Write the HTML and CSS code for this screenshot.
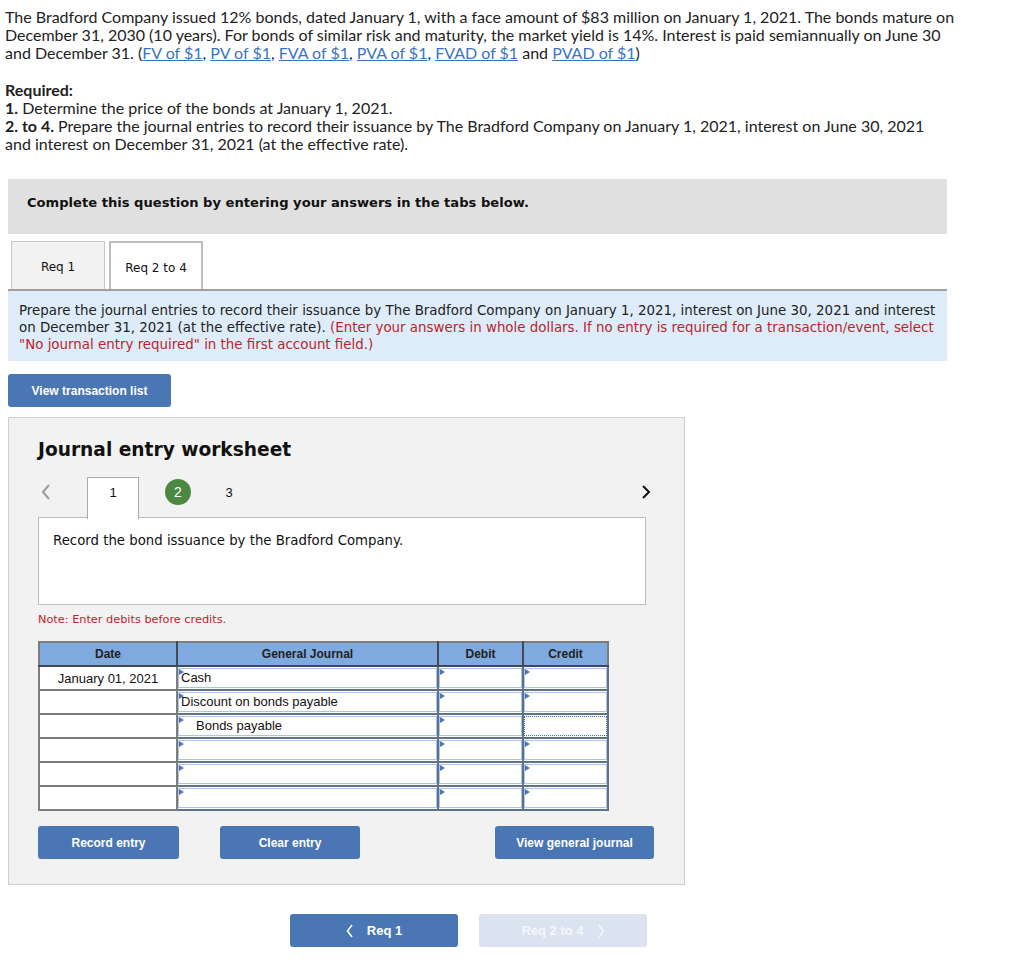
FILE: index.html
```html
<!DOCTYPE html>
<html lang="en">
<head>
  <meta charset="UTF-8">
  <title>Bond Issuance</title>
  <link rel="stylesheet" href="styles.css">
</head>
<body>

  <!-- Question -->
  <div class="question">
    <p>The Bradford Company issued 12% bonds, dated January 1, with a face amount of $83 million on January 1, 2021. The bonds mature on December 31, 2030 (10 years). For bonds of similar risk and maturity, the market yield is 14%. Interest is paid semiannually on June 30 and December 31. (<a href="#">FV of $1</a>, <a href="#">PV of $1</a>, <a href="#">FVA of $1</a>, <a href="#">PVA of $1</a>, <a href="#">FVAD of $1</a> and <a href="#">PVAD of $1</a>)</p>
    <p class="required">
      <b>Required:</b><br>
      <b>1.</b> Determine the price of the bonds at January 1, 2021.<br>
      <b>2. to 4.</b> Prepare the journal entries to record their issuance by The Bradford Company on January 1, 2021, interest on June 30, 2021 and interest on December 31, 2021 (at the effective rate).
    </p>
  </div>

  <div class="content">
    <div class="banner">Complete this question by entering your answers in the tabs below.</div>

    <div class="tabs">
      <div class="tab">Req 1</div>
      <div class="tab active">Req 2 to 4</div>
    </div>

    <div class="instructions">
      Prepare the journal entries to record their issuance by The Bradford Company on January 1, 2021, interest on June 30, 2021 and interest on December 31, 2021 (at the effective rate). <span class="red">(Enter your answers in whole dollars. If no entry is required for a transaction/event, select "No journal entry required" in the first account field.)</span>
    </div>

    <button class="btn btn-list">View transaction list</button>

    <!-- Worksheet -->
    <div class="worksheet">
      <h2>Journal entry worksheet</h2>

      <div class="entry-nav">
        <span class="arrow prev">
          <svg width="10" height="16" viewBox="0 0 10 16"><path d="M8 1 L2 8 L8 15" fill="none" stroke="#9a9a9a" stroke-width="2"/></svg>
        </span>
        <span class="step current">1</span>
        <span class="step done">2</span>
        <span class="step">3</span>
        <span class="arrow next">
          <svg width="10" height="16" viewBox="0 0 10 16"><path d="M2 2 L8 8 L2 14" fill="none" stroke="#111" stroke-width="2"/></svg>
        </span>
      </div>

      <div class="desc">Record the bond issuance by the Bradford Company.</div>

      <p class="note">Note: Enter debits before credits.</p>

      <table class="journal">
        <thead>
          <tr>
            <th class="col-date">Date</th>
            <th class="col-acct">General Journal</th>
            <th class="col-amt">Debit</th>
            <th class="col-amt">Credit</th>
          </tr>
        </thead>
        <tbody>
          <tr>
            <td class="date">January 01, 2021</td>
            <td><div class="field">Cash</div></td>
            <td><div class="field"></div></td>
            <td><div class="field"></div></td>
          </tr>
          <tr>
            <td class="date"></td>
            <td><div class="field">Discount on bonds payable</div></td>
            <td><div class="field"></div></td>
            <td><div class="field"></div></td>
          </tr>
          <tr>
            <td class="date"></td>
            <td><div class="field indent">Bonds payable</div></td>
            <td><div class="field"></div></td>
            <td><div class="field focus"></div></td>
          </tr>
          <tr>
            <td class="date"></td>
            <td><div class="field"></div></td>
            <td><div class="field"></div></td>
            <td><div class="field"></div></td>
          </tr>
          <tr>
            <td class="date"></td>
            <td><div class="field"></div></td>
            <td><div class="field"></div></td>
            <td><div class="field"></div></td>
          </tr>
          <tr>
            <td class="date"></td>
            <td><div class="field"></div></td>
            <td><div class="field"></div></td>
            <td><div class="field"></div></td>
          </tr>
        </tbody>
      </table>

      <div class="actions">
        <button class="btn btn-record">Record entry</button>
        <button class="btn btn-clear">Clear entry</button>
        <button class="btn btn-view">View general journal</button>
      </div>
    </div>

    <div class="pager">
      <button class="btn btn-page">
        <svg width="8" height="14" viewBox="0 0 8 14"><path d="M6 1 L1.5 7 L6 13" fill="none" stroke="#fff" stroke-width="1.6"/></svg>
        <span>Req 1</span>
      </button>
      <button class="btn btn-page disabled">
        <span>Req 2 to 4</span>
        <svg width="8" height="14" viewBox="0 0 8 14"><path d="M2 1 L6.5 7 L2 13" fill="none" stroke="#f4f7fb" stroke-width="1.6"/></svg>
      </button>
    </div>
  </div>

</body>
</html>
```

FILE: styles.css
```css
* {
  margin: 0;
  padding: 0;
  box-sizing: border-box;
}

body {
  font-family: 'Lato', 'Liberation Sans', sans-serif;
  color: #222;
  background: #fff;
}

/* Question text */
.question {
  width: 960px;
  padding: 8px 0 0 5px;
  font-size: 16px;
  line-height: 18.2px;
}

.question a {
  color: #3b73c0;
}

.required {
  margin-top: 18px;
  width: 945px;
}

.content {
  width: 939px;
  margin: 26px 0 0 8px;
}

.banner {
  background: #e0e0e0;
  height: 55px;
  padding: 13px 19px 0;
  font-family: 'DejaVu Sans', Verdana, sans-serif;
  font-size: 13.1px;
  font-weight: bold;
  line-height: 22px;
  color: #111;
}

/* Tabs */
.tabs {
  display: flex;
  margin-top: 7px;
  padding-left: 3px;
  border-bottom: 2px solid #a0a0a0;
  gap: 4px;
}

.tab {
  width: 94px;
  height: 48px;
  border: 1px solid #c8c8c8;
  border-bottom: none;
  background: #f2f2f2;
  font-family: 'DejaVu Sans', Verdana, sans-serif;
  font-size: 12px;
  line-height: 50px;
  text-align: center;
  color: #111;
}

.tab.active {
  background: #fff;
  border: 2px solid #bdbdbd;
  border-bottom: none;
}

.instructions {
  background: #ddecf8;
  padding: 11px 11px 8px;
  font-family: 'DejaVu Sans', Verdana, sans-serif;
  font-size: 13.4px;
  line-height: 17px;
  color: #222;
}

.red {
  color: #b8262b;
}

/* Buttons */
.btn {
  display: flex;
  align-items: center;
  justify-content: center;
  gap: 13px;
  border: none;
  border-radius: 3px;
  background: #4a76b3;
  color: #fff;
  font-family: 'Liberation Sans', Arial, sans-serif;
  font-size: 12px;
  font-weight: bold;
  height: 33px;
}

.btn-list {
  margin-top: 13px;
  width: 163px;
}

/* Worksheet */
.worksheet {
  margin-top: 10px;
  width: 677px;
  background: #f2f2f2;
  border: 1px solid #cfcfcf;
  padding: 21px 0 25px 29px;
}

.worksheet h2 {
  font-family: 'DejaVu Sans', Verdana, sans-serif;
  font-size: 18.6px;
  line-height: 22px;
  color: #111;
}

.entry-nav {
  display: flex;
  align-items: flex-start;
  height: 41px;
  margin-top: 16px;
  width: 616px;
  font-family: 'Liberation Sans', Arial, sans-serif;
  font-size: 13px;
  color: #111;
}

.arrow {
  display: flex;
  align-items: center;
  height: 30px;
}

.arrow.prev {
  margin-left: 3px;
  margin-right: 36px;
}

.arrow.next {
  margin-left: auto;
  margin-right: 3px;
}

.step {
  display: flex;
  align-items: center;
  justify-content: center;
  width: 26px;
  height: 26px;
  margin-top: 2px;
  margin-right: 26px;
}

.step.current {
  width: 52px;
  height: 42px;
  margin-top: 0;
  align-items: flex-start;
  padding-top: 7px;
  background: #fff;
  border: 1px solid #a9a9a9;
  border-bottom: none;
  position: relative;
  z-index: 1;
  margin-right: 26px;
}

.step.done {
  border-radius: 50%;
  background: #4d8843;
  color: #fff;
  font-size: 14px;
  margin-right: 25px;
}

.desc {
  width: 608px;
  height: 88px;
  margin-top: -1px;
  background: #fff;
  border: 1px solid #bcbcbc;
  padding: 14px 14px;
  font-family: 'DejaVu Sans', Verdana, sans-serif;
  font-size: 13.3px;
  line-height: 17px;
  color: #111;
}

.note {
  margin-top: 8px;
  font-family: 'DejaVu Sans', Verdana, sans-serif;
  font-size: 11.3px;
  line-height: 14px;
  color: #b8262b;
}

/* Journal table */
.journal {
  margin-top: 14px;
  border-collapse: collapse;
  border: 2px solid #7d7d7d;
  font-family: 'Liberation Sans', Arial, sans-serif;
  font-size: 13px;
  color: #111;
}

.journal th {
  background: #7faae0;
  border: 2px solid #3f4a55;
  border-top: none;
  height: 24px;
  font-size: 12px;
  font-weight: bold;
  color: #222;
}

.journal th:first-child {
  border-left: none;
}

.journal th:last-child {
  border-right: none;
}

.col-date { width: 138px; }
.col-acct { width: 261px; }
.col-amt { width: 85px; }

.journal td {
  height: 24px;
  padding: 0;
  border: 2px solid #5f7287;
  background: #fff;
}

.journal td.date {
  border-color: #7d7d7d;
  text-align: center;
}

.field {
  position: relative;
  height: 20px;
  border: 1px solid #a9c4e8;
  padding-left: 2px;
  line-height: 18px;
}

.field::before {
  content: "";
  position: absolute;
  top: 0;
  left: 0;
  border-top: 3px solid transparent;
  border-bottom: 3px solid transparent;
  border-left: 5px solid #4a76b3;
}

.field.indent {
  padding-left: 17px;
}

.field.focus {
  border: 1px dotted #3b6fb5;
}

.field.focus::before {
  display: none;
}

.actions {
  display: flex;
  width: 616px;
  margin-top: 15px;
}

.btn-record {
  width: 141px;
  height: 33px;
}

.btn-clear {
  width: 140px;
  height: 33px;
  margin-left: 41px;
}

.btn-view {
  width: 159px;
  height: 33px;
  margin-left: auto;
}

/* Pager */
.pager {
  display: flex;
  gap: 21px;
  margin-top: 29px;
  padding-left: 282px;
}

.btn-page {
  width: 168px;
  font-size: 13px;
}

.btn-page.disabled {
  background: #dae3ef;
  color: #f4f7fb;
}
```
